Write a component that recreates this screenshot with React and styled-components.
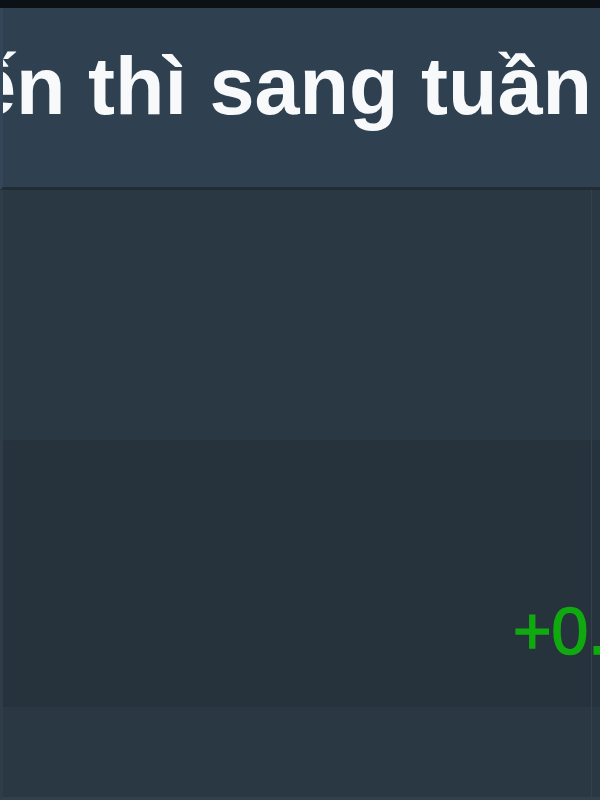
import React from "react";
import styled, { createGlobalStyle } from "styled-components";

const Global = createGlobalStyle`
  html, body { margin: 0; padding: 0; background: #27333d; }
  body { font-family: "Liberation Sans", Arial, sans-serif; overflow: hidden; }
  #root { width: 600px; height: 800px; overflow: hidden; }
`;

const Page = styled.div`
  width: 600px;
  height: 800px;
  display: flex;
  flex-direction: column;
  background: #27333d;
  overflow: hidden;
`;

const TopStrip = styled.div`
  height: 8px;
  flex: none;
  background: #0c1115;
`;

const HeaderRow = styled.div`
  height: 182px;
  flex: none;
  background: #2f4050;
  border-left: 3px solid #34475a;
  border-bottom: 3px solid #222c35;
  box-sizing: border-box;
  overflow: hidden;
  display: flex;
  align-items: flex-start;
`;

const Title = styled.h1`
  margin: 0;
  margin-left: -32px;
  padding-top: 32px;
  font-family: "Liberation Sans", Arial, sans-serif;
  font-weight: 700;
  font-size: 81px;
  line-height: 92px;
  color: #f7f9fb;
  white-space: nowrap;
  letter-spacing: 0;
`;

const Body = styled.div`
  display: flex;
  flex-direction: column;
  flex: 1;
  border-left: 3px solid #2f3d49;
  border-bottom: 3px solid #323f4c;
`;

const Row = styled.div`
  height: ${(p) => p.$h}px;
  flex: none;
  display: grid;
  grid-template-columns: 588px 1fr;
  background: ${(p) => (p.$alt ? "#26323c" : "#2a3843")};
`;

const Cell = styled.div`
  white-space: nowrap;
  display: flex;
  align-items: flex-end;
  justify-content: flex-start;
  ${(p) => (p.$last ? "border-left: 1px solid #34414e;" : "")}
`;

const Change = styled.span`
  font-family: "Liberation Sans", Arial, sans-serif;
  font-size: 66px;
  line-height: 67px;
  color: #10aa10;
  -webkit-text-stroke: 1.6px #10aa10;
  margin-bottom: 42px;
  margin-left: 510px;
`;

export default function App() {
  return (
    <Page>
      <Global />
      <TopStrip />
      <HeaderRow>
        <Title>ến thì sang tuần</Title>
      </HeaderRow>
      <Body>
        <Row $h={250}>
          <Cell />
          <Cell $last />
        </Row>
        <Row $h={267} $alt>
          <Cell>
            <Change>+0.</Change>
          </Cell>
          <Cell $last />
        </Row>
        <Row $h={90}>
          <Cell />
          <Cell $last />
        </Row>
      </Body>
    </Page>
  );
}
